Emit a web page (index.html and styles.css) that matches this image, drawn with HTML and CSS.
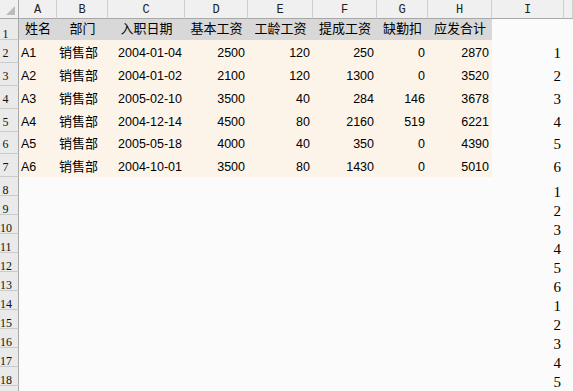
FILE: index.html
```html
<!DOCTYPE html>
<html lang="zh">
<head>
<meta charset="utf-8">
<title>工资表</title>
<link rel="stylesheet" href="styles.css">
</head>
<body>
<div class="sheet">
  <div class="row colhead">
    <div class="corner"><svg width="9" height="9" viewBox="0 0 9 9"><polygon points="9,0 9,9 0,9" fill="#bcbcbc"/></svg></div>
    <div class="ch">A</div><div class="ch">B</div><div class="ch">C</div><div class="ch">D</div><div class="ch">E</div><div class="ch">F</div><div class="ch">G</div><div class="ch">H</div><div class="ch">I</div><div class="ch"></div>
  </div>

  <div class="row r1">
    <div class="rh"><span>1</span></div>
    <div class="c hd">姓名</div><div class="c hd">部门</div><div class="c hd">入职日期</div><div class="c hd">基本工资</div><div class="c hd">工龄工资</div><div class="c hd">提成工资</div><div class="c hd">缺勤扣</div><div class="c hd">应发合计</div>
    <div class="c"></div><div class="c"></div>
  </div>

  <div class="row tall">
    <div class="rh"><span>2</span></div>
    <div class="c d l">A1</div><div class="c d l zh">销售部</div><div class="c d r">2004-01-04</div><div class="c d r">2500</div><div class="c d r">120</div><div class="c d r">250</div><div class="c d r">0</div><div class="c d r">2870</div>
    <div class="c n">1</div><div class="c"></div>
  </div>
  <div class="row tall">
    <div class="rh"><span>3</span></div>
    <div class="c d l">A2</div><div class="c d l zh">销售部</div><div class="c d r">2004-01-02</div><div class="c d r">2100</div><div class="c d r">120</div><div class="c d r">1300</div><div class="c d r">0</div><div class="c d r">3520</div>
    <div class="c n">2</div><div class="c"></div>
  </div>
  <div class="row tall">
    <div class="rh"><span>4</span></div>
    <div class="c d l">A3</div><div class="c d l zh">销售部</div><div class="c d r">2005-02-10</div><div class="c d r">3500</div><div class="c d r">40</div><div class="c d r">284</div><div class="c d r">146</div><div class="c d r">3678</div>
    <div class="c n">3</div><div class="c"></div>
  </div>
  <div class="row tall">
    <div class="rh"><span>5</span></div>
    <div class="c d l">A4</div><div class="c d l zh">销售部</div><div class="c d r">2004-12-14</div><div class="c d r">4500</div><div class="c d r">80</div><div class="c d r">2160</div><div class="c d r">519</div><div class="c d r">6221</div>
    <div class="c n">4</div><div class="c"></div>
  </div>
  <div class="row tall h22">
    <div class="rh"><span>6</span></div>
    <div class="c d l">A5</div><div class="c d l zh">销售部</div><div class="c d r">2005-05-18</div><div class="c d r">4000</div><div class="c d r">40</div><div class="c d r">350</div><div class="c d r">0</div><div class="c d r">4390</div>
    <div class="c n">5</div><div class="c"></div>
  </div>
  <div class="row tall">
    <div class="rh"><span>7</span></div>
    <div class="c d l">A6</div><div class="c d l zh">销售部</div><div class="c d r">2004-10-01</div><div class="c d r">3500</div><div class="c d r">80</div><div class="c d r">1430</div><div class="c d r">0</div><div class="c d r">5010</div>
    <div class="c n">6</div><div class="c"></div>
  </div>

  <div class="row short"><div class="rh"><span>8</span></div><div class="blank"></div><div class="c n">1</div><div class="c"></div></div>
  <div class="row short"><div class="rh"><span>9</span></div><div class="blank"></div><div class="c n">2</div><div class="c"></div></div>
  <div class="row short"><div class="rh"><span>10</span></div><div class="blank"></div><div class="c n">3</div><div class="c"></div></div>
  <div class="row short"><div class="rh"><span>11</span></div><div class="blank"></div><div class="c n">4</div><div class="c"></div></div>
  <div class="row short"><div class="rh"><span>12</span></div><div class="blank"></div><div class="c n">5</div><div class="c"></div></div>
  <div class="row short"><div class="rh"><span>13</span></div><div class="blank"></div><div class="c n">6</div><div class="c"></div></div>
  <div class="row short"><div class="rh"><span>14</span></div><div class="blank"></div><div class="c n">1</div><div class="c"></div></div>
  <div class="row short"><div class="rh"><span>15</span></div><div class="blank"></div><div class="c n">2</div><div class="c"></div></div>
  <div class="row short"><div class="rh"><span>16</span></div><div class="blank"></div><div class="c n">3</div><div class="c"></div></div>
  <div class="row short"><div class="rh"><span>17</span></div><div class="blank"></div><div class="c n">4</div><div class="c"></div></div>
  <div class="row short"><div class="rh"><span>18</span></div><div class="blank"></div><div class="c n">5</div><div class="c"></div></div>
  <div class="row short"><div class="rh"></div></div>
</div>
</body>
</html>
```

FILE: styles.css
```css
html, body {
  margin: 0;
  padding: 0;
}
body {
  background: #fbfbfb;
  width: 573px;
  height: 391px;
  overflow: hidden;
  font-family: "Liberation Sans", "Noto Sans CJK SC", sans-serif;
  color: #000;
}
.sheet {
  display: flex;
  flex-direction: column;
}
.row {
  display: grid;
  grid-template-columns: 19px 38px 51px 77px 63px 65px 64px 51px 64px 72px 1fr;
  flex-shrink: 0;
}
.colhead { height: 19px; background: #f0f0f0; }
.r1 { height: 21px; }
.tall { height: 23px; }
.tall.h22 { height: 22px; }
.short { height: 19px; }

.corner {
  box-sizing: border-box;
  border-right: 1px solid #a8a8a8;
  border-bottom: 1px solid #a8a8a8;
  display: flex;
  justify-content: flex-end;
  align-items: flex-end;
  padding: 0 3px 3px 0;
  background: #f0f0f0;
}
.ch {
  box-sizing: border-box;
  border-right: 1px solid #cfcfcf;
  border-bottom: 1px solid #a8a8a8;
  display: flex;
  justify-content: center;
  align-items: flex-end;
  font-family: "Liberation Mono", monospace;
  font-size: 12px;
  line-height: 10px;
  padding-bottom: 3px;
  color: #222;
  overflow: hidden;
}

.rh {
  box-sizing: border-box;
  background: #eaeaea;
  border-right: 1px solid #a8a8a8;
  border-bottom: 1px solid #cbcbcb;
  display: flex;
  align-items: flex-end;
  font-family: "Liberation Serif", serif;
  font-size: 12px;
  line-height: 10px;
  color: #111;
  overflow: hidden;
}
.rh span {
  flex: 0 0 11px;
  width: 11px;
  text-align: center;
  white-space: nowrap;
}
.tall .rh { line-height: 12px; padding-bottom: 3px; }
.r1 .rh { line-height: 9px; }

.c {
  display: flex;
  align-items: flex-end;
  white-space: nowrap;
  overflow: hidden;
  min-width: 0;
  font-size: 12.5px;
  line-height: 14px;
}
.hd {
  background: #d8d8d8;
  justify-content: center;
  font-size: 13px;
  padding-bottom: 4px;
}
.d {
  background: #fcf4e9;
  padding-bottom: 3px;
}
.l { justify-content: flex-start; padding-left: 2px; }
.r { justify-content: flex-end; padding-right: 3px; }
.zh { font-size: 13px; }

.n {
  justify-content: flex-end;
  padding-right: 3px;
  font-family: "Liberation Serif", serif;
  font-size: 15px;
  line-height: 14px;
  overflow: visible;
}
.tall .n { padding-bottom: 3px; }
.short .n { line-height: 14px; margin-bottom: -3px; }

.blank { grid-column: 2 / 10; }
```
